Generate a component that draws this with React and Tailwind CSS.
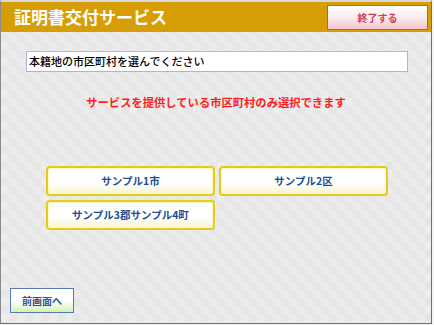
export default function App() {
  const jp = { fontFamily: '"Noto Sans CJK JP", "Noto Sans", sans-serif' };
  const cityBtn =
    "h-[30px] rounded-[4px] border-2 border-[#e3cc1c] bg-[linear-gradient(to_bottom,#ffffff_0%,#ffffff_55%,#f8f5cf_100%)] text-[10.5px] font-bold text-[#1d4f91] flex items-center justify-center shadow-[inset_0_0_0_1px_#fff8c0]";
  return (
    <div className="w-[434px] h-[325px] bg-[#f3f3f3] pr-[2px] pb-[1px]" style={jp}>
      <div className="h-full flex flex-col border-t-2 border-t-[#d8d8d8] border-l border-r border-b border-l-[#8a8a8a] border-r-[#6e6e6e] border-b-[#6e6e6e] bg-[repeating-conic-gradient(#ededed_0_25%,#e6e6e6_0_50%)] bg-size-[16px_16px]">
        <div className="h-[30px] shrink-0 bg-[#d69d04] flex items-start justify-between pl-[13px] pr-[3px] pt-[3px]">
          <div className="text-white font-bold text-[17px] leading-[24px]">証明書交付サービス</div>
          <div className="w-[101px] h-[25px] border border-[#e84a4a] bg-[linear-gradient(to_bottom,#ffffff_0%,#fbe8ec_55%,#f2c2cb_100%)] flex items-center justify-center text-[10px] font-bold text-[#d23a55]">
            終了する
          </div>
        </div>
        <div className="ml-[25px] mt-[19px] w-[382px] h-[21px] border border-[#a6b6d6] bg-white flex items-center pl-[2px] text-[11px] font-medium text-black">
          本籍地の市区町村を選んでください
        </div>
        <div className="mt-[22px] text-center text-[11.3px] font-bold text-[#ff1e1e] leading-[16px]">
          サービスを提供している市区町村のみ選択できます
        </div>
        <div className="ml-[45px] mt-[56px] w-[342px] grid grid-cols-2 gap-x-[4px] gap-y-[4px]">
          <div className={cityBtn}>サンプル1市</div>
          <div className={cityBtn}>サンプル2区</div>
          <div className={cityBtn}>サンプル3郡サンプル4町</div>
        </div>
        <div className="flex-1" />
        <div className="ml-[9px] mb-[10px] w-[64px] h-[25px] border border-[#5a78b4] bg-[linear-gradient(to_bottom,#ffffff_0%,#ffffff_50%,#d4f2b4_100%)] flex items-center justify-center text-[10px] font-bold text-[#2a5592]">
          前画面へ
        </div>
      </div>
    </div>
  );
}
